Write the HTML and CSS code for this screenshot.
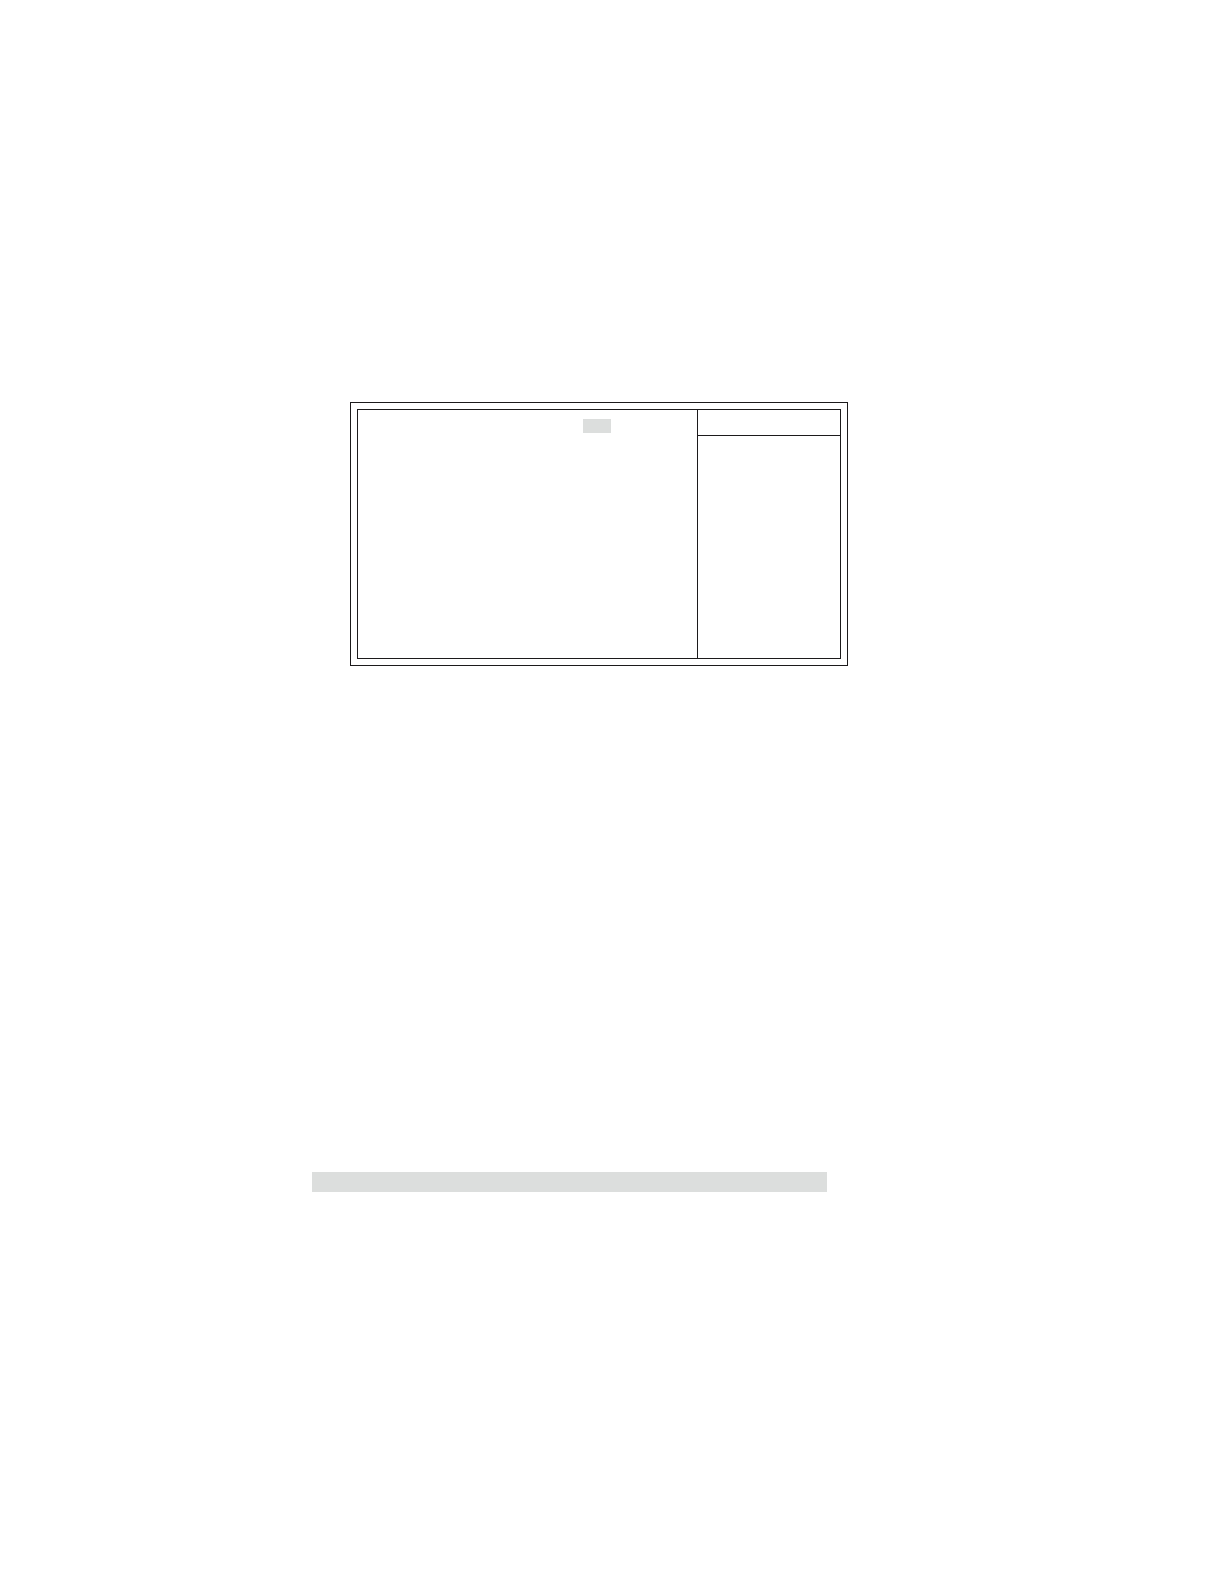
FILE: index.html
```html
<!DOCTYPE html>
<html lang="en">
<head>
<meta charset="utf-8">
<meta name="viewport" content="width=device-width, initial-scale=1">
<title>Setup</title>
<link rel="stylesheet" href="styles.css">
</head>
<body>
<main class="page">
  <section class="frame">
    <div class="screen">
      <div class="settings"><div class="selected"></div></div>
      <aside class="help"><div class="help-header"></div></aside>
    </div>
  </section>
  <div class="strip"></div>
</main>
</body>
</html>
```
FILE: styles.css
```css
* {
  box-sizing: border-box;
}

body {
  margin: 0;
  background: #fff;
  color: #1c1a1b;
  font-family: "Liberation Sans", sans-serif;
}

.page {
  display: grid;
  /* left margin, strip overhang, shared column, frame overhang, right margin */
  grid-template-columns: 312fr 38fr 477fr 21fr 376fr;
  row-gap: 506px;
  padding: 402px 0 392px;
}

.frame {
  grid-column: 3 / 5;
  padding: 6px;
  border: 1px solid;
}

.screen {
  display: grid;
  grid-template-columns: minmax(0, 1fr) 143px;
  min-height: 250px;
  border: 1px solid;
}

.settings {
  display: flex;
  align-items: flex-start;
  justify-content: flex-end;
  padding: 9px 86px 9px 9px;
}

.selected {
  width: 28px;
  height: 14px;
  background: #dcdedd;
}

.help {
  border-left: 1px solid;
}

.help-header {
  height: 26px;
  border-bottom: 1px solid;
}

.strip {
  grid-column: 2 / 4;
  height: 20px;
  background: #dcdedd;
}
```
